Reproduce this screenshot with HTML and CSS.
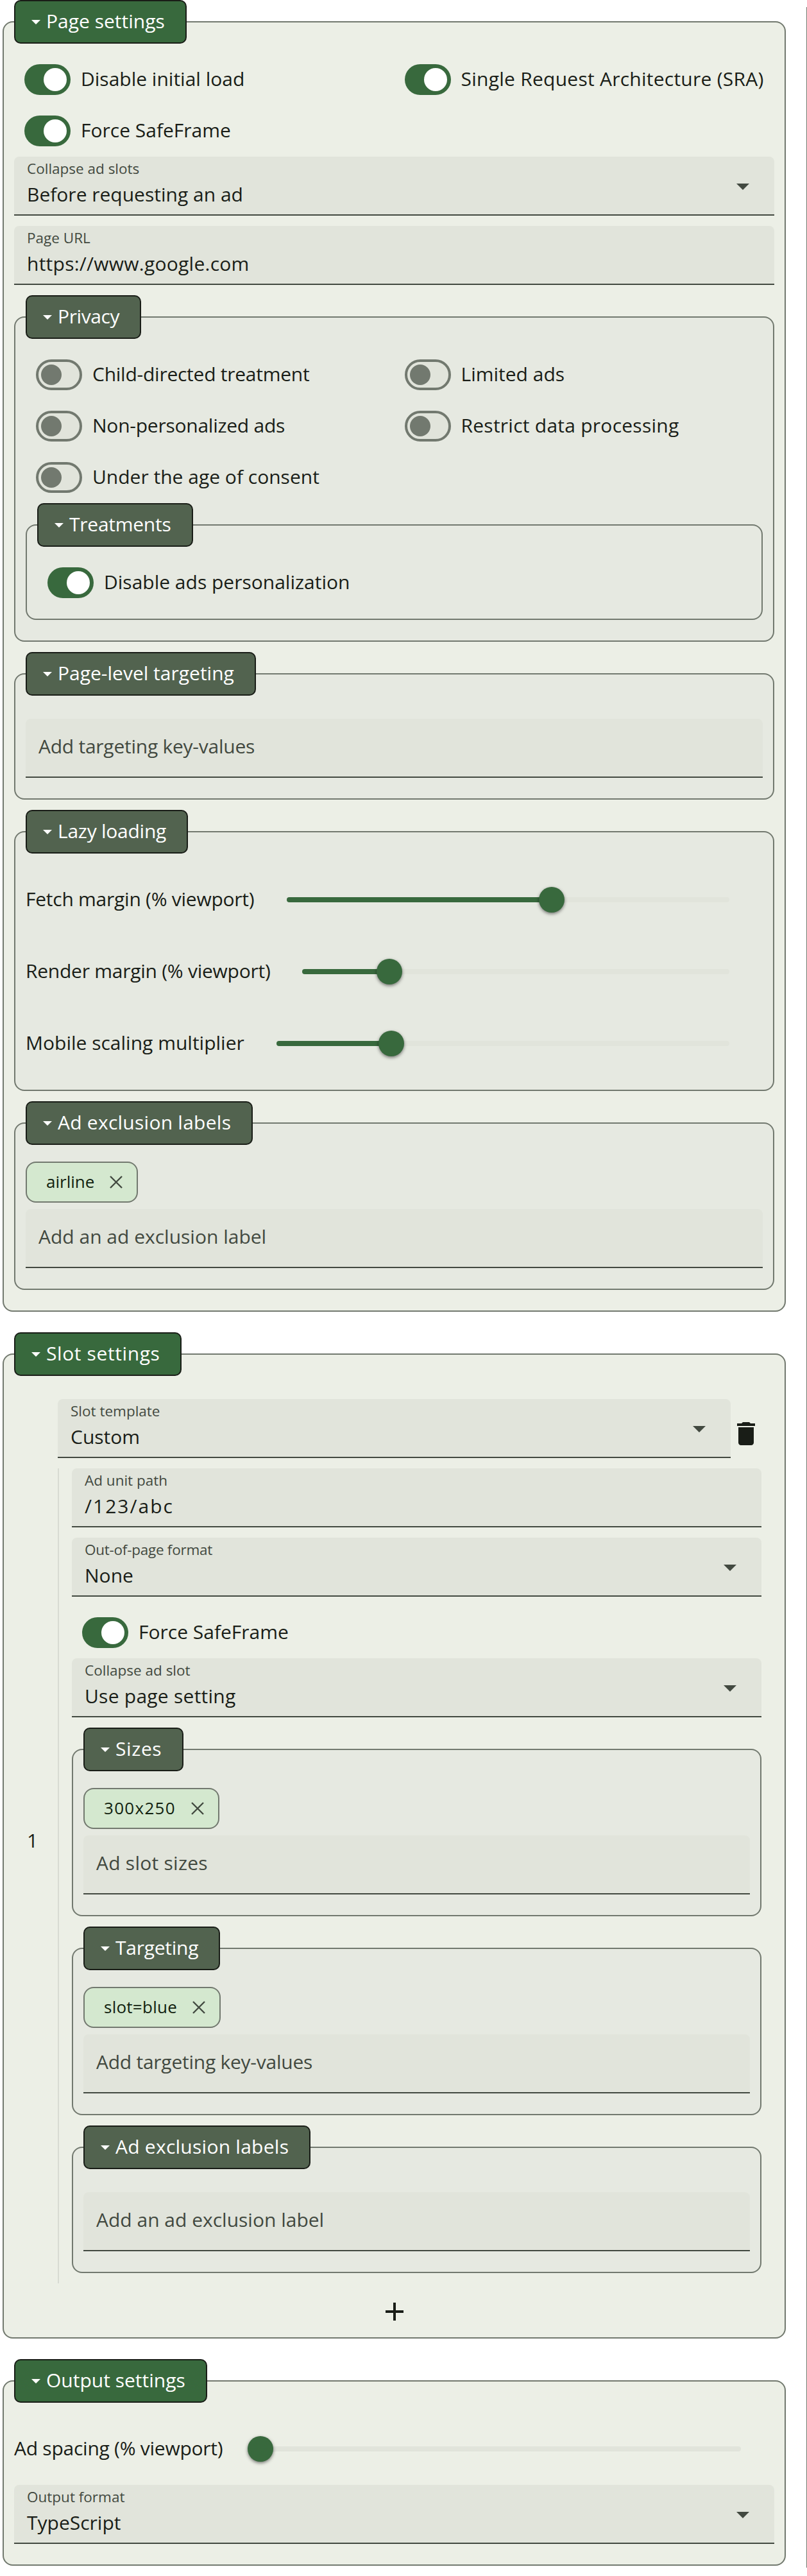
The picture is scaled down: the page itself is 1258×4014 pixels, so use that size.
FILE: index.html
```html
<!DOCTYPE html>
<html lang="en">
<head>
<meta charset="utf-8">
<title>Ad settings</title>
<link rel="stylesheet" href="styles.css">
</head>
<body>
<div class="layout">
<main class="config">

<fieldset class="panel">
  <legend class="legend"><i class="caret"></i>Page settings</legend>
  <div class="switches">
    <label class="toggle"><span class="switch on"></span><span class="text">Disable initial load</span></label>
    <label class="toggle"><span class="switch on"></span><span class="text loose">Single Request Architecture (SRA)</span></label>
    <label class="toggle"><span class="switch on"></span><span class="text">Force SafeFrame</span></label>
  </div>
  <div class="field"><span class="label">Collapse ad slots</span><span class="value">Before requesting an ad</span><i class="arrow"></i></div>
  <div class="field"><span class="label">Page URL</span><span class="value loose">https://www.google.com</span></div>

  <fieldset class="panel nested">
    <legend class="legend snug"><i class="caret"></i>Privacy</legend>
    <div class="switches">
      <label class="toggle"><span class="switch"></span><span class="text tight">Child-directed treatment</span></label>
      <label class="toggle"><span class="switch"></span><span class="text">Limited ads</span></label>
      <label class="toggle"><span class="switch"></span><span class="text tight">Non-personalized ads</span></label>
      <label class="toggle"><span class="switch"></span><span class="text loose">Restrict data processing</span></label>
      <label class="toggle"><span class="switch"></span><span class="text">Under the age of consent</span></label>
    </div>
    <fieldset class="panel nested">
      <legend class="legend tight"><i class="caret"></i>Treatments</legend>
      <div class="switches">
        <label class="toggle"><span class="switch on"></span><span class="text">Disable ads personalization</span></label>
      </div>
    </fieldset>
  </fieldset>

  <fieldset class="panel nested">
    <legend class="legend"><i class="caret"></i>Page-level targeting</legend>
    <div class="chips"></div>
    <div class="field"><span class="placeholder tight">Add targeting key-values</span></div>
  </fieldset>

  <fieldset class="panel nested">
    <legend class="legend tight"><i class="caret"></i>Lazy loading</legend>
    <div class="slider"><span class="slider-label fetch tight">Fetch margin (% viewport)</span><div class="track"><div class="travel"><div class="active" style="width:60%"></div></div></div></div>
    <div class="slider"><span class="slider-label render tight">Render margin (% viewport)</span><div class="track"><div class="travel"><div class="active" style="width:20%"></div></div></div></div>
    <div class="slider"><span class="slider-label mobile">Mobile scaling multiplier</span><div class="track"><div class="travel"><div class="active" style="width:25%"></div></div></div></div>
  </fieldset>

  <fieldset class="panel nested">
    <legend class="legend loose"><i class="caret"></i>Ad exclusion labels</legend>
    <div class="chips">
      <span class="chip"><span class="chip-text">airline</span><svg class="close" viewBox="0 0 20 20"><path d="M1 1 19 19M19 1 1 19"/></svg></span>
    </div>
    <div class="field"><span class="placeholder">Add an ad exclusion label</span></div>
  </fieldset>
</fieldset>

<fieldset class="panel">
  <legend class="legend wide"><i class="caret"></i>Slot settings</legend>
  <div class="slot">
    <span class="slot-number">1</span>
    <div class="slot-body">
      <div class="slot-head">
        <div class="field"><span class="label">Slot template</span><span class="value">Custom</span><i class="arrow"></i></div>
        <svg class="icon" viewBox="0 0 24 24"><path d="M6 19c0 1.100.9 2 2 2h8c1.100 0 2-.9 2-2V7H6v12zM19 4h-3.500l-1-1h-5l-1 1H5v2h14V4z"/></svg>
      </div>
      <div class="slot-config">
        <div class="field"><span class="label">Ad unit path</span><span class="value path">/123/abc</span></div>
        <div class="field"><span class="label tight">Out-of-page format</span><span class="value">None</span><i class="arrow"></i></div>
        <label class="toggle"><span class="switch on"></span><span class="text">Force SafeFrame</span></label>
        <div class="field"><span class="label">Collapse ad slot</span><span class="value loose">Use page setting</span><i class="arrow"></i></div>

        <fieldset class="panel nested">
          <legend class="legend wide"><i class="caret"></i>Sizes</legend>
          <div class="chips">
            <span class="chip"><span class="chip-text digits">300x250</span><svg class="close" viewBox="0 0 20 20"><path d="M1 1 19 19M19 1 1 19"/></svg></span>
          </div>
          <div class="field"><span class="placeholder loose">Ad slot sizes</span></div>
        </fieldset>

        <fieldset class="panel nested">
          <legend class="legend tight"><i class="caret"></i>Targeting</legend>
          <div class="chips">
            <span class="chip"><span class="chip-text loose">slot=blue</span><svg class="close" viewBox="0 0 20 20"><path d="M1 1 19 19M19 1 1 19"/></svg></span>
          </div>
          <div class="field"><span class="placeholder tight">Add targeting key-values</span></div>
        </fieldset>

        <fieldset class="panel nested">
          <legend class="legend loose"><i class="caret"></i>Ad exclusion labels</legend>
          <div class="chips"></div>
          <div class="field"><span class="placeholder">Add an ad exclusion label</span></div>
        </fieldset>
      </div>
    </div>
  </div>
  <svg class="icon add" viewBox="0 0 24 24"><path d="M19 13h-6v6h-2v-6H5v-2h6V5h2v6h6v2z"/></svg>
</fieldset>

<fieldset class="panel">
  <legend class="legend"><i class="caret"></i>Output settings</legend>
  <div class="slider"><span class="slider-label spacing tight">Ad spacing (% viewport)</span><div class="track"><div class="travel"><div class="active empty" style="width:0%"></div></div></div></div>
  <div class="field"><span class="label">Output format</span><span class="value">TypeScript</span><i class="arrow"></i></div>
</fieldset>

</main>
<aside class="divider"></aside>
</div>
</body>
</html>
```

FILE: styles.css
```css
* { box-sizing: border-box; }

html, body { margin: 0; }

body {
  background: #fff;
  color: #191d17;
  font: 30px/40px "Open Sans", "Noto Sans", sans-serif;
}

.layout {
  display: flex;
  justify-content: space-between;
  width: 1258px;
  height: 4014px;
}

.config {
  display: flex;
  flex-direction: column;
  gap: 32px;
  flex: none;
  width: 1221px;
  margin-left: 4px;
}

.divider {
  width: 1px;
  margin: 11px 0 13px;
  background: #72796f;
}

.tight { letter-spacing: -.25px; }
.loose { letter-spacing: .25px; }
.wide { letter-spacing: .6px; }
.path { letter-spacing: 2px; }

.panel {
  min-width: 0;
  margin: 0;
  padding: 0 16px 16px;
  border: 2px solid #72796f;
  border-radius: 16px;
  background: #ecefe6;
}

.panel.nested {
  margin-bottom: 16px;
  background: #e6e9e1;
}

.legend {
  display: flex;
  height: 68px;
  margin-bottom: 16px;
  padding: 0 32px 0 25px;
  border: 2px solid #191d17;
  border-radius: 10px;
  background: #38693d;
  color: #fff;
  font-weight: 500;
  line-height: 62px;
  white-space: nowrap;
}

.nested > .legend { background: #52634f; }

.snug { letter-spacing: -.4px; }

.caret {
  flex: none;
  width: 14px;
  height: 7px;
  margin: 29px 9px 0 0;
  background: #fff;
  clip-path: polygon(0 0, 100% 0, 50% 100%);
}

.switches {
  display: grid;
  grid-template-columns: 1fr 1fr;
}

.toggle {
  display: flex;
  align-items: center;
  gap: 16px;
  height: 80px;
  padding-left: 16px;
  white-space: nowrap;
}

.text { padding-bottom: 2px; }

.switch {
  display: flex;
  align-items: center;
  flex: none;
  width: 72px;
  height: 48px;
  padding-left: 4px;
  border: 4px solid #72796f;
  border-radius: 24px;
  background: #e1e4db;
}

.switch::before {
  content: "";
  width: 32px;
  height: 32px;
  border-radius: 50%;
  background: #72796f;
}

.switch.on {
  justify-content: flex-end;
  padding: 0 6px;
  border: 0;
  background: #38693d;
}

.switch.on::before {
  width: 36px;
  height: 36px;
  background: #fff;
}

.field {
  display: grid;
  grid-template: 34px 1fr / 1fr 20px;
  align-items: start;
  height: 92px;
  margin-bottom: 16px;
  padding: 4px 39px 0 20px;
  border-bottom: 2px solid #424940;
  border-radius: 8px 8px 0 0;
  background: #e1e4db;
  white-space: nowrap;
}

.label {
  color: #424940;
  font-size: 22.5px;
  line-height: 30px;
}

.value {
  grid-area: 2 / 1;
  padding-top: 1px;
}

.placeholder {
  grid-row: 1 / 3;
  padding-top: 19px;
  color: #424940;
}

.arrow {
  grid-area: 1 / 2 / 3 / 3;
  width: 20px;
  height: 10px;
  margin-top: 38px;
  background: #424940;
  clip-path: polygon(0 0, 100% 0, 50% 100%);
}

.chips {
  display: flex;
  padding: 10px 0;
}

.chip {
  display: flex;
  align-items: center;
  gap: 24px;
  height: 64px;
  padding: 0 22px 0 30px;
  border: 2px solid #72796f;
  border-radius: 16px;
  background: #d4e8cf;
  color: #111f0f;
  font-size: 26px;
}

.chip-text { padding-bottom: 3px; }

.digits { letter-spacing: 1.3px; }

.close {
  width: 20px;
  height: 20px;
  fill: none;
  stroke: #424940;
  stroke-width: 2.4;
}

.slider {
  display: flex;
  align-items: center;
  height: 112px;
  padding-right: 52px;
}

.slider-label {
  flex: none;
  padding-bottom: 3px;
  white-space: nowrap;
}

.fetch { width: 407px; }
.render { width: 431px; }
.mobile { width: 391px; }
.spacing { width: 380px; }

.track {
  flex: 1;
  height: 8px;
  padding: 0 4px;
  border-radius: 4px;
  background: #e1e4db;
}

.travel { height: 8px; }

.active {
  display: flex;
  align-items: center;
  justify-content: flex-end;
  height: 8px;
  background: #38693d;
  box-shadow: -4px 0 0 #38693d;
  border-radius: 4px 0 0 4px;
}

.active.empty { box-shadow: none; }

.active::after {
  content: "";
  flex: none;
  width: 40px;
  height: 40px;
  margin-right: -20px;
  border-radius: 50%;
  background: #38693d;
  box-shadow: 0 2px 5px rgba(0, 0, 0, .5);
}

.active.empty::after { margin-left: -20px; }

.slot {
  display: flex;
  align-items: center;
  padding: 20px;
}

.slot-number {
  flex: none;
  width: 48px;
  padding-bottom: 2px;
}

.slot-body { flex: 1; }

.slot-head {
  display: flex;
  align-items: center;
}

.slot-head .field { flex: 1; }

.icon {
  display: block;
  flex: none;
  width: 48px;
  height: 48px;
  fill: #191d17;
}

.add { margin: 0 auto; }

.slot-config {
  display: flow-root;
  padding-left: 20px;
  border-left: 2px solid #d8dbd3;
}
```
